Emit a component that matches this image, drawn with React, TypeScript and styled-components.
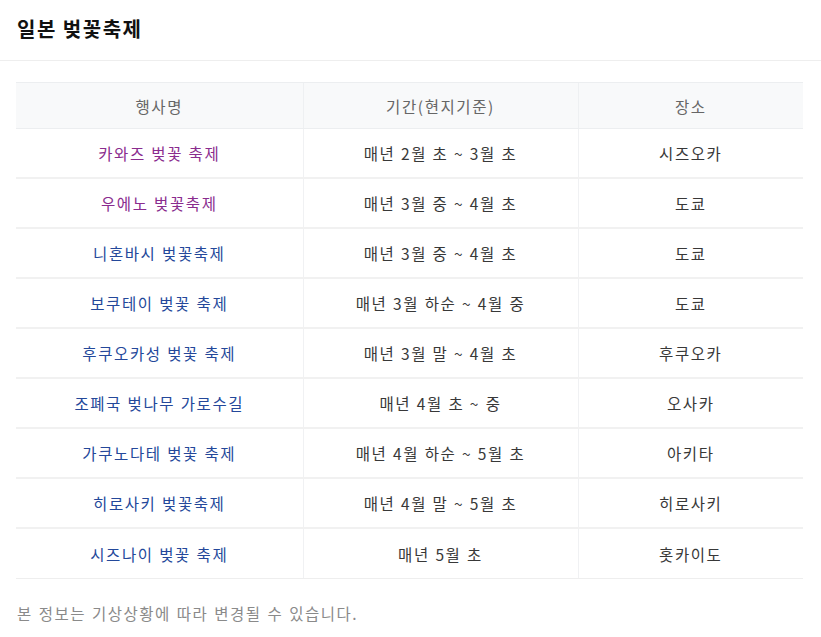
import React from 'react';
import styled, { createGlobalStyle } from 'styled-components';

const GlobalStyle = createGlobalStyle`
  body {
    margin: 0;
    background: #fff;
    font-family: "Noto Sans CJK KR", "Noto Sans", sans-serif;
    color: #333;
  }
`;

const Header = styled.header`
  height: 61px;
  display: flex;
  align-items: center;
  padding: 0 17px;
  border-bottom: 1px solid #eeeeee;
  box-sizing: border-box;
`;

const Title = styled.h1`
  margin: 0 0 4px;
  font-size: 20px;
  font-weight: 700;
  color: #111;
  letter-spacing: 1.5px;
`;

const Body = styled.main`
  padding: 21px 18px 0 16px;
`;

const Table = styled.table`
  width: 100%;
  border-collapse: collapse;
  font-size: 15.5px;
  letter-spacing: 1.6px;
  word-spacing: 0.5px;
`;

const HeadCell = styled.th`
  height: 45px;
  padding: 0;
  background: #f8f9fa;
  color: #666;
  font-weight: 400;
  border-top: 1px solid #eceef0;
  border-bottom: 1px solid #eceef0;
  border-left: 1px solid #eef0f2;
  &:first-child {
    border-left: none;
  }
`;

const Cell = styled.td`
  height: 48px;
  padding: 0;
  text-align: center;
  color: #383838;
  border-bottom: 2px solid #f1f1f1;
  border-left: 1px solid #f0f1f3;
  &:first-child {
    border-left: none;
  }
`;

const Row = styled.tr`
  &:last-child td {
    height: 49px;
    border-bottom: 1px solid #eeeeee;
  }
`;

const EventLink = styled.a<{ $visited?: boolean }>`
  color: ${(p) => (p.$visited ? '#8a2c8e' : '#24489a')};
  text-decoration: none;
`;

const Note = styled.p`
  margin: 23px 0 0 1px;
  font-size: 15.5px;
  letter-spacing: 1.5px;
  word-spacing: 1px;
  color: #8a8a8a;
`;

const events = [
  { name: '카와즈 벚꽃 축제', period: '매년 2월 초 ~ 3월 초', place: '시즈오카', visited: true },
  { name: '우에노 벚꽃축제', period: '매년 3월 중 ~ 4월 초', place: '도쿄', visited: true },
  { name: '니혼바시 벚꽃축제', period: '매년 3월 중 ~ 4월 초', place: '도쿄' },
  { name: '보쿠테이 벚꽃 축제', period: '매년 3월 하순 ~ 4월 중', place: '도쿄' },
  { name: '후쿠오카성 벚꽃 축제', period: '매년 3월 말 ~ 4월 초', place: '후쿠오카' },
  { name: '조폐국 벚나무 가로수길', period: '매년 4월 초 ~ 중', place: '오사카' },
  { name: '가쿠노다테 벚꽃 축제', period: '매년 4월 하순 ~ 5월 초', place: '아키타' },
  { name: '히로사키 벚꽃축제', period: '매년 4월 말 ~ 5월 초', place: '히로사키' },
  { name: '시즈나이 벚꽃 축제', period: '매년 5월 초', place: '홋카이도' },
];

const App = () => {
  return (
    <>
      <GlobalStyle />
      <Header>
        <Title>일본 벚꽃축제</Title>
      </Header>
      <Body>
        <Table>
          <colgroup>
            <col style={{ width: 287 }} />
            <col style={{ width: 275 }} />
            <col />
          </colgroup>
          <thead>
            <tr>
              <HeadCell>행사명</HeadCell>
              <HeadCell>기간(현지기준)</HeadCell>
              <HeadCell>장소</HeadCell>
            </tr>
          </thead>
          <tbody>
            {events.map((e) => (
              <Row key={e.name}>
                <Cell>
                  <EventLink href="#" $visited={e.visited}>{e.name}</EventLink>
                </Cell>
                <Cell>{e.period}</Cell>
                <Cell>{e.place}</Cell>
              </Row>
            ))}
          </tbody>
        </Table>
        <Note>본 정보는 기상상황에 따라 변경될 수 있습니다.</Note>
      </Body>
    </>
  );
};

export default App;
